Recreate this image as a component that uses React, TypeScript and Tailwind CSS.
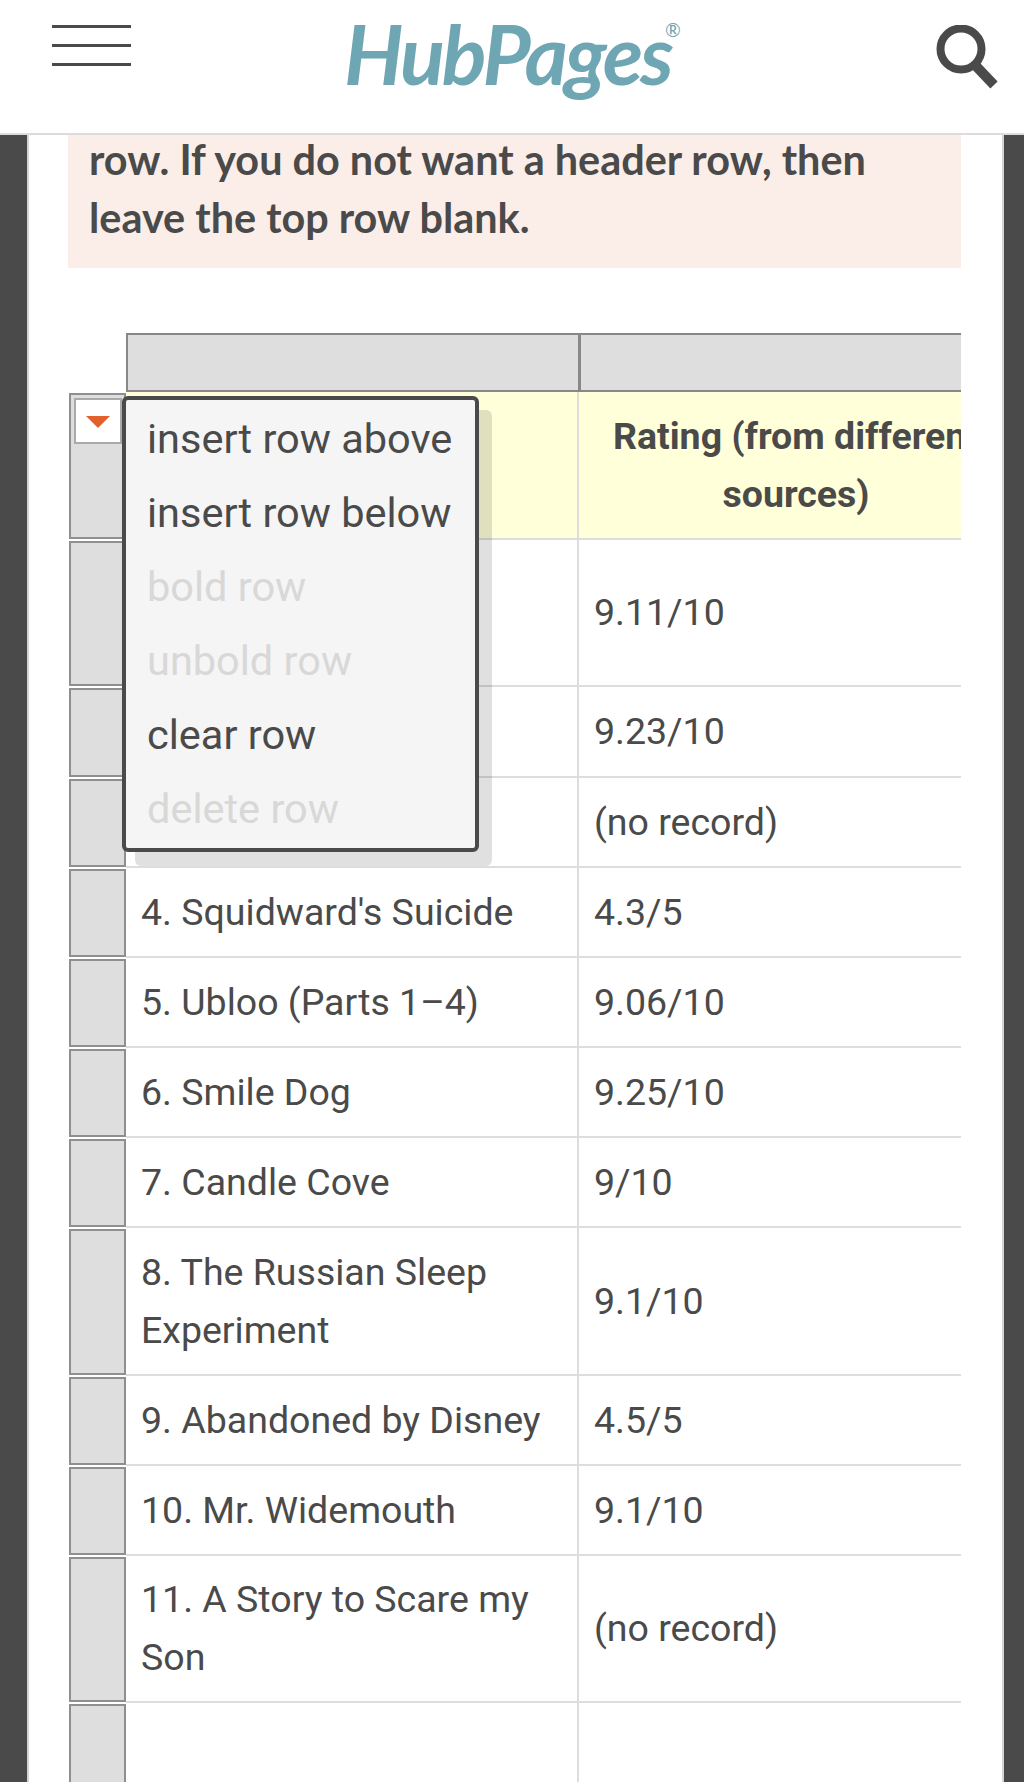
import React from 'react';

const rows = [
  { id: 'h', height: 'h-[148px]', name: '', rating: '' },
  { id: 'r1', height: 'h-[147px]', name: '', rating: '9.11/10' },
  { id: 'r2', height: 'h-[91px]', name: '', rating: '9.23/10' },
  { id: 'r3', height: 'h-[90px]', name: '', rating: '(no record)' },
  { id: 'r4', height: 'h-[90px]', name: "4. Squidward's Suicide", rating: '4.3/5' },
  { id: 'r5', height: 'h-[90px]', name: '5. Ubloo (Parts 1–4)', rating: '9.06/10' },
  { id: 'r6', height: 'h-[90px]', name: '6. Smile Dog', rating: '9.25/10' },
  { id: 'r7', height: 'h-[90px]', name: '7. Candle Cove', rating: '9/10' },
  { id: 'r8', height: 'h-[148px]', name: '8. The Russian Sleep Experiment', rating: '9.1/10' },
  { id: 'r9', height: 'h-[90px]', name: '9. Abandoned by Disney', rating: '4.5/5' },
  { id: 'r10', height: 'h-[90px]', name: '10. Mr. Widemouth', rating: '9.1/10' },
  { id: 'r11', height: 'h-[147px]', name: '11. A Story to Scare my Son', rating: '(no record)' },
  { id: 'r12', height: 'h-[90px]', name: '', rating: '' },
];

const menuItems = [
  { label: 'insert row above', enabled: true },
  { label: 'insert row below', enabled: true },
  { label: 'bold row', enabled: false },
  { label: 'unbold row', enabled: false },
  { label: 'clear row', enabled: true },
  { label: 'delete row', enabled: false },
];

const Header = () => (
  <header className="h-[135px] bg-white border-b-2 border-[#dcdcdc] flex items-start justify-between pl-[52px] pr-[24px]">
    <div className="w-[79px] mt-[25px] flex flex-col gap-[16px]">
      <div className="h-[3px] bg-[#4a4a4a]" />
      <div className="h-[3px] bg-[#4a4a4a]" />
      <div className="h-[3px] bg-[#4a4a4a]" />
    </div>
    <div className="relative mt-[5px] -ml-[50px] text-[#6fa6b3] font-['Lato',sans-serif] italic font-bold text-[83px] leading-[96px] tracking-[-3px]">
      HubPages
      <span className="absolute -right-[10px] top-[15px] text-[19px] leading-[20px] tracking-normal not-italic font-normal">®</span>
    </div>
    <svg width="66" height="66" viewBox="0 0 66 66" className="mt-[25px]" fill="none" stroke="#4a4a4a">
      <circle cx="27" cy="24" r="20.5" strokeWidth="8" />
      <path d="M41 40 L60 60" strokeWidth="10" />
    </svg>
  </header>
);

const RowMenu = () => (
  <div className="absolute left-[54px] top-[63px] w-[357px] h-[456px] bg-[#f5f5f5] border-4 border-[#4a4a4a] rounded-[6px] shadow-[13px_14px_0_rgba(0,0,0,0.12)] pt-[2px] pl-[21px]">
    {menuItems.map((item) => (
      <div
        key={item.label}
        className={`h-[74px] flex items-center text-[41.5px] ${item.enabled ? 'text-[#4a4a4a]' : 'text-[#d8d8d8]'}`}
      >
        {item.label}
      </div>
    ))}
  </div>
);

const Table = () => (
  <div className="relative mt-[65px] w-[893px] overflow-hidden">
    {/* column handles */}
    <div className="flex pl-[58px] h-[59px]">
      <div className="w-[455px] shrink-0 bg-[#dedede] border-2 border-r-[3px] border-[#888888]" />
      <div className="flex-1 bg-[#dedede] border-y-2 border-[#888888]" />
    </div>

    {rows.map((row, i) => (
      <div key={row.id} className={`flex ${row.height}`}>
        <div className="relative w-[57px] shrink-0 my-[1px] ml-[1px] bg-[#dedede] border-2 border-[#8f8f8f]">
          {i === 0 && (
            <div className="absolute left-[3px] top-[3px] w-[48px] h-[46px] bg-white border-2 border-[#aaaaaa] flex items-center justify-center">
              <div className="w-0 h-0 mt-[2px] border-x-[12px] border-x-transparent border-t-[12px] border-t-[#e2602b]" />
            </div>
          )}
        </div>
        <div
          className={`flex w-[1000px] shrink-0 border-b-2 border-[#dddddd] ${i === 0 ? 'bg-[#ffffd9]' : 'bg-white'}`}
        >
          <div className="w-[453px] shrink-0 border-r-2 border-[#dddddd] px-[15px] flex items-center text-[37.5px] leading-[58px]">
            <span className="pb-[1px]">{row.name}</span>
          </div>
          {i === 0 ? (
            <div className="w-[434px] px-[15px] flex items-center justify-center text-center text-[37.5px] leading-[58px] font-bold">
              Rating (from different sources)
            </div>
          ) : (
            <div className="flex-1 px-[15px] pb-[1px] flex items-center text-[37.5px] leading-[58px]">{row.rating}</div>
          )}
        </div>
      </div>
    ))}

    <RowMenu />
  </div>
);

export default function App() {
  return (
    <div className="w-[1024px] h-[1782px] overflow-hidden bg-[#4a4a4a] font-['Roboto',sans-serif] text-[#4a4a4a]">
      <Header />
      <div className="ml-[27px] mr-[20px] h-[1647px] overflow-hidden bg-white border-x-2 border-[#d4d4d4] px-[39px]">
        <div className="h-[133px] w-[893px] overflow-hidden bg-[#fbeee9] px-[21px]">
          <p className="-mt-[5px] font-['Lato',sans-serif] font-bold text-[41.4px] leading-[58px]">
            row. If you do not want a header row, then leave the top row blank.
          </p>
        </div>
        <Table />
      </div>
    </div>
  );
}
